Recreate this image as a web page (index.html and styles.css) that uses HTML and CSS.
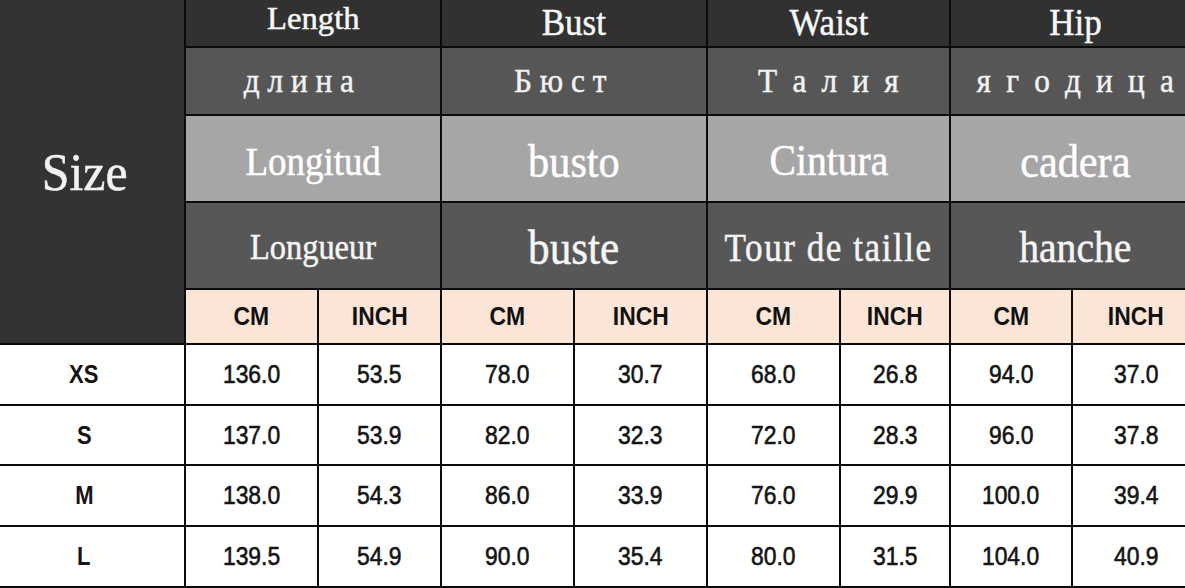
FILE: index.html
```html
<!DOCTYPE html>
<html lang="en">
<head>
<meta charset="utf-8">
<title>Size chart</title>
<link rel="stylesheet" href="styles.css">
</head>
<body>
<table class="chart">
  <colgroup>
    <col class="c-size">
    <col class="c-133"><col class="c-123">
    <col class="c-133"><col class="c-133">
    <col class="c-133"><col class="c-110">
    <col class="c-122"><col class="c-last">
  </colgroup>
  <thead>
    <tr class="r-en">
      <th class="size-head" rowspan="5"><span class="t">Size</span></th>
      <th colspan="2" class="len"><span class="t">Length</span></th>
      <th colspan="2"><span class="t">Bust</span></th>
      <th colspan="2"><span class="t">Waist</span></th>
      <th colspan="2"><span class="t">Hip</span></th>
    </tr>
    <tr class="r-ru">
      <th colspan="2" class="off"><span class="t">д л и н а</span></th>
      <th colspan="2" class="off"><span class="t">Б ю с т</span></th>
      <th colspan="2" class="wide"><span class="t">Т а л и я</span></th>
      <th colspan="2" class="wide"><span class="t">я г о д и ц а</span></th>
    </tr>
    <tr class="r-es">
      <th colspan="2" class="sm"><span class="t">Longitud</span></th>
      <th colspan="2" class="lg"><span class="t">busto</span></th>
      <th colspan="2"><span class="t">Cintura</span></th>
      <th colspan="2" class="lg"><span class="t">cadera</span></th>
    </tr>
    <tr class="r-fr">
      <th colspan="2" class="sm"><span class="t">Longueur</span></th>
      <th colspan="2" class="lg"><span class="t">buste</span></th>
      <th colspan="2" class="tour"><span class="t">Tour de taille</span></th>
      <th colspan="2"><span class="t">hanche</span></th>
    </tr>
    <tr class="r-unit">
      <th><span class="nx">CM</span></th><th><span class="nx">INCH</span></th>
      <th><span class="nx">CM</span></th><th><span class="nx">INCH</span></th>
      <th><span class="nx">CM</span></th><th><span class="nx">INCH</span></th>
      <th><span class="nx">CM</span></th><th><span class="nx">INCH</span></th>
    </tr>
  </thead>
  <tbody>
    <tr class="r-d61">
      <th class="lbl"><span class="nx">XS</span></th>
      <td><span class="nx">136.0</span></td><td><span class="nx">53.5</span></td>
      <td><span class="nx">78.0</span></td><td><span class="nx">30.7</span></td>
      <td><span class="nx">68.0</span></td><td><span class="nx">26.8</span></td>
      <td><span class="nx">94.0</span></td><td><span class="nx">37.0</span></td>
    </tr>
    <tr class="r-d60">
      <th class="lbl"><span class="nx">S</span></th>
      <td><span class="nx">137.0</span></td><td><span class="nx">53.9</span></td>
      <td><span class="nx">82.0</span></td><td><span class="nx">32.3</span></td>
      <td><span class="nx">72.0</span></td><td><span class="nx">28.3</span></td>
      <td><span class="nx">96.0</span></td><td><span class="nx">37.8</span></td>
    </tr>
    <tr class="r-d61">
      <th class="lbl"><span class="nx">M</span></th>
      <td><span class="nx">138.0</span></td><td><span class="nx">54.3</span></td>
      <td><span class="nx">86.0</span></td><td><span class="nx">33.9</span></td>
      <td><span class="nx">76.0</span></td><td><span class="nx">29.9</span></td>
      <td><span class="nx">100.0</span></td><td><span class="nx">39.4</span></td>
    </tr>
    <tr class="r-d61">
      <th class="lbl"><span class="nx">L</span></th>
      <td><span class="nx">139.5</span></td><td><span class="nx">54.9</span></td>
      <td><span class="nx">90.0</span></td><td><span class="nx">35.4</span></td>
      <td><span class="nx">80.0</span></td><td><span class="nx">31.5</span></td>
      <td><span class="nx">104.0</span></td><td><span class="nx">40.9</span></td>
    </tr>
  </tbody>
</table>
</body>
</html>
```
FILE: styles.css
```css
html, body {
  margin: 0;
  padding: 0;
  background: #ffffff;
  overflow: hidden;
}

.chart {
  border-collapse: collapse;
  table-layout: fixed;
  width: 1200px;
  font-family: "Liberation Serif", "Times New Roman", serif;
}

.c-size { width: 185px; }
.c-133 { width: 133px; }
.c-123 { width: 123px; }
.c-110 { width: 110px; }
.c-122 { width: 122px; }
.c-last { width: 128px; }

.chart th,
.chart td {
  border: 2px solid #0b0b0b;
  padding: 0;
  text-align: center;
  vertical-align: middle;
  font-weight: normal;
  overflow: hidden;
  white-space: nowrap;
}

.chart thead tr:first-child th { border-top: none; }
.chart tr > :first-child { border-left: none; }
.chart tr.r-ru > :first-child,
.chart tr.r-es > :first-child,
.chart tr.r-fr > :first-child,
.chart tr.r-unit > :first-child { border-left: 2px solid #0b0b0b; }

/* serif header text: tall, slightly condensed, heavy */
.t {
  display: inline-block;
  transform: scaleX(0.92);
  -webkit-text-stroke: 0.5px currentColor;
}

.r-en th.size-head {
  background: #333333;
  color: #f2f2f2;
  font-size: 53px;
  line-height: normal;
  vertical-align: middle;
  padding-right: 14px;
}
.size-head .t { transform: scaleX(0.94); }

.r-en { height: 47px; }
.r-en th {
  background: #313131;
  color: #f7f7f7;
  font-size: 38px;
  line-height: 44px;
  vertical-align: top;
}
.r-en th.len {
  font-size: 32px;
  line-height: 37px;
}
.r-en th.len .t { transform: scaleX(1.02); }

.r-ru { height: 68px; }
.r-ru th {
  background: #565656;
  color: #f2f2f2;
  font-size: 34px;
}
.r-ru th.off { padding-right: 28px; }
.r-ru th.wide { word-spacing: 8px; }

.r-es { height: 87px; }
.r-es th {
  background: #a6a6a6;
  color: #ffffff;
  font-size: 44px;
  padding-top: 4px;
}
.r-es th .t { transform: scaleX(0.9); }
.r-es th.sm { font-size: 41px; }
.r-es th.lg { font-size: 47px; }

.r-fr { height: 87px; }
.r-fr th {
  background: #575757;
  color: #f5f5f5;
  font-size: 44px;
  padding-top: 3px;
}
.r-fr th .t { transform: scaleX(0.9); }
.r-fr th.sm { font-size: 36px; }
.r-fr th.lg { font-size: 48px; }
.r-fr th.tour { font-size: 39px; letter-spacing: 1.7px; }

.r-unit { height: 55px; }
.r-unit th {
  background: #fbe5d6;
  color: #111111;
  font-family: "Liberation Sans", Arial, sans-serif;
  font-weight: bold;
  font-size: 26px;
}

.r-d61 { height: 61px; }
.r-d60 { height: 60px; }

tbody td,
tbody th {
  background: #ffffff;
  color: #141414;
  font-family: "Liberation Sans", Arial, sans-serif;
  font-size: 26px;
}
tbody td .nx {
  -webkit-text-stroke: 0.6px currentColor;
}
tbody th.lbl {
  font-weight: bold;
  font-size: 25px;
  padding-right: 16px;
}

.nx {
  display: inline-block;
  transform: scaleX(0.88);
}
```
